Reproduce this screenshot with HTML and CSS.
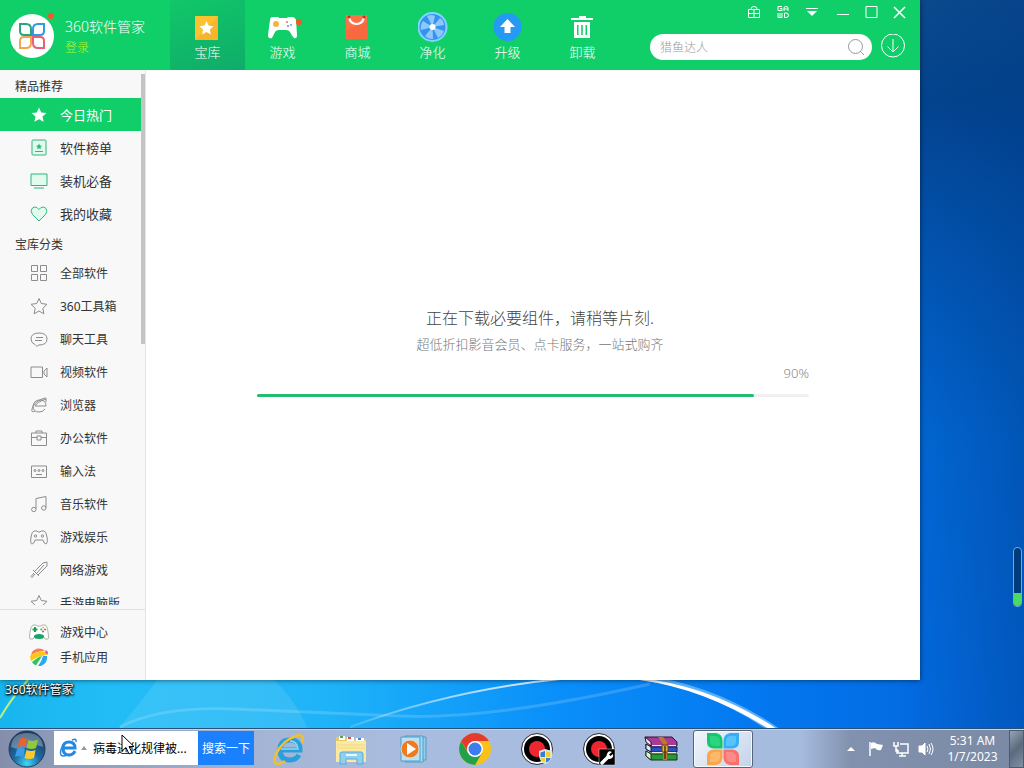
FILE: index.html
```html
<!DOCTYPE html>
<html lang="zh-CN">
<head>
  <meta charset="UTF-8">
  <meta name="viewport" content="width=device-width, initial-scale=1.0">
  <title>360软件管家</title>
  <link rel="stylesheet" href="styles.css">
</head>
<body>
  <div class="desktop">
    <svg class="wallpaper" viewBox="0 0 1024 729" preserveAspectRatio="none" aria-hidden="true">
      <defs>
        <linearGradient id="sky" x1="0" y1="0" x2="0" y2="1">
          <stop offset="0" stop-color="#0b4a8c"/>
          <stop offset="0.14" stop-color="#03448f"/>
          <stop offset="0.35" stop-color="#0156b4"/>
          <stop offset="0.6" stop-color="#0168d6"/>
          <stop offset="1" stop-color="#036be2"/>
        </linearGradient>
        <linearGradient id="glow" x1="0" y1="0" x2="1" y2="0">
          <stop offset="0" stop-color="#17b5ee"/>
          <stop offset="0.12" stop-color="#22bdf6"/>
          <stop offset="0.35" stop-color="#1fb4f8"/>
          <stop offset="0.6" stop-color="#0a90fa"/>
          <stop offset="0.82" stop-color="#0378f0"/>
          <stop offset="1" stop-color="#036be2"/>
        </linearGradient>
        <linearGradient id="edge" x1="0" y1="0" x2="1" y2="0">
          <stop offset="0" stop-color="#003a86" stop-opacity="0"/>
          <stop offset="1" stop-color="#003a86" stop-opacity="0.4"/>
        </linearGradient>
        <linearGradient id="arc" x1="0" y1="0" x2="1" y2="0">
          <stop offset="0" stop-color="#fff" stop-opacity="0.15"/>
          <stop offset="0.5" stop-color="#fff" stop-opacity="0.6"/>
          <stop offset="1" stop-color="#fff" stop-opacity="0.9"/>
        </linearGradient>
      </defs>
      <rect width="1024" height="729" fill="url(#sky)"/>
      <rect y="640" width="920" height="89" fill="url(#glow)"/>
      <rect x="900" width="124" height="729" fill="url(#edge)"/>
      <path d="M118 729Q138 706 160 676H270Q296 700 308 729Z" fill="#fff" opacity="0.1"/>
      <path d="M120 727Q160 706 235 709T400 716T650 684" fill="none" stroke="#fff" stroke-width="3" opacity="0.16"/>
      <path d="M350 727Q450 690 560 679" fill="none" stroke="url(#arc)" stroke-width="2"/>
      <path d="M640 675Q715 684 780 729L766 729Q705 688 640 680Z" fill="#8fd0ff" opacity="0.6"/>
      <path d="M640 678Q712 686 777 729L769 729Q705 689 640 680Z" fill="#fff"/>
      <path d="M0 718Q10 700 28 680" fill="none" stroke="#b9ee84" stroke-width="2"/>
    </svg>

    <div class="desktop-label">360软件管家</div>
    <div class="volume-gadget"><div class="volume-level"></div></div>

    <div class="window">
      <header class="header">
        <div class="brand">
          <div class="logo">
            <svg width="28" height="28" viewBox="0 0 28 28" fill="none" stroke-width="2">
              <path d="M13 13H6Q2 13 2 9V2H8Q13 2 13 7Z" stroke="#28a87a"/>
              <path d="M15 13V7Q15 2 20 2H26V9Q26 13 22 13Z" stroke="#2f9be0"/>
              <path d="M13 15H6Q2 15 2 19V26H8Q13 26 13 21Z" stroke="#f0a850"/>
              <path d="M15 15H22Q26 15 26 19V26H20Q15 26 15 21Z" stroke="#ea5f78"/>
            </svg>
            <span class="logo-dot"></span>
          </div>
          <div>
            <div class="brand-name">360软件管家</div>
            <a class="login" href="#">登录</a>
          </div>
        </div>

        <nav class="tabs">
          <a class="tab active" href="#">
            <svg width="30" height="30" viewBox="0 0 30 30">
              <rect x="2" y="4" width="23" height="24" fill="#fbc22f"/>
              <path d="M2 28L25 4V28Z" fill="#f8b52c"/>
              <path d="M13.500 9l2.100 4.600 5 .6-3.700 3.400 1 5-4.400-2.500-4.400 2.500 1-5-3.700-3.400 5-.6z" fill="#fff"/>
            </svg>
            <span>宝库</span>
          </a>
          <a class="tab" href="#">
            <svg width="38" height="30" viewBox="0 0 38 30">
              <path d="M9 5H14L15 6H23L24 5H28Q31 5 32 8L33 23Q33 27 30 26Q28 24 26 20Q25 18 22 18H15Q12 18 11 20Q9 24 8 26Q4 27 4 23L6 8Q6 5 9 5Z" fill="#fff"/>
              <circle cx="12" cy="12" r="3" fill="#f8b13c"/>
              <circle cx="23" cy="10" r="1" fill="#f06a6a"/>
              <circle cx="27" cy="13" r="1" fill="#56a8e8"/>
              <circle cx="24" cy="14" r="1" fill="#a06ad0"/>
              <circle cx="35" cy="10" r="3" fill="#fb5428"/>
            </svg>
            <span>游戏</span>
          </a>
          <a class="tab" href="#">
            <svg width="30" height="30" viewBox="0 0 30 30">
              <path d="M3 3H24L25 27H2Z" fill="#f9683f"/>
              <path d="M3 3H24V10L3 18Z" fill="#fb7a50" opacity="0.6"/>
              <path d="M6 5Q7 12 13.500 12T21 5" fill="none" stroke="#fff" stroke-width="2"/>
              <circle cx="6" cy="5" r="1.500" fill="#b5391c"/>
              <circle cx="21" cy="5" r="1.500" fill="#b5391c"/>
            </svg>
            <span>商城</span>
          </a>
          <a class="tab" href="#">
            <svg width="30" height="30" viewBox="0 0 30 30">
              <circle cx="14.500" cy="15" r="14" fill="#3493f2" stroke="#82d4ff" stroke-width="2"/>
              <g fill="#8cc8fa">
                <path d="M14.500 15L9 4Q14 2 17 4Z"/>
                <path d="M14.500 15L22 6Q26 9 26 13Z"/>
                <path d="M14.500 15L26 19Q24 24 20 26Z"/>
                <path d="M14.500 15L15 27Q10 27 7 24Z"/>
                <path d="M14.500 15L3 18Q2 13 5 9Z"/>
              </g>
              <circle cx="14.500" cy="15" r="3" fill="#fff"/>
            </svg>
            <span>净化</span>
          </a>
          <a class="tab" href="#">
            <svg width="30" height="30" viewBox="0 0 30 30">
              <circle cx="14.500" cy="15" r="14" fill="#249af4"/>
              <path d="M14.500 7L22 15H17.500V21H11.500V15H7Z" fill="#fff"/>
            </svg>
            <span>升级</span>
          </a>
          <a class="tab" href="#">
            <svg width="30" height="30" viewBox="0 0 30 30" fill="#fff">
              <path d="M11 4H18V6H25V8H3V6H11Z"/>
              <path fill-rule="evenodd" d="M6 10H22V26H6ZM9 13V23H10.500V13ZM13.200 13V23H14.800V13ZM17.500 13V23H19V13Z"/>
            </svg>
            <span>卸载</span>
          </a>
        </nav>

        <div class="header-right">
          <div class="window-bar">
            <div class="tool-buttons">
              <button type="button" aria-label="礼包">
                <svg width="14" height="14" viewBox="0 0 14 14"><path d="M1.500 4.500H12.500V12.500H1.500ZM1.500 8.500H12.500M7 4V13M4 4Q4 1.500 7 1.500T10 4"/></svg>
              </button>
              <button type="button" aria-label="皮肤">
                <svg width="14" height="14" viewBox="0 0 14 14"><path d="M6 1.500H2V5.500H6V3.500H4M8 6V3Q8 1.500 10 1.500T12 3V6M8 4H12M2 8V12.500H6V8M4 8V12M8.500 8V12.500H10Q12.500 12.500 12.500 10.200T10 8Z"/></svg>
              </button>
              <button type="button" aria-label="菜单">
                <svg width="14" height="14" viewBox="0 0 14 14"><path d="M1 3.500H13"/><path d="M2 6H12L7 11Z" fill="#fff" stroke="none"/></svg>
              </button>
            </div>
            <div class="window-buttons">
              <button type="button" aria-label="最小化">
                <svg width="14" height="14" viewBox="0 0 14 14"><path d="M1 9.500H13"/></svg>
              </button>
              <button type="button" aria-label="最大化">
                <svg width="14" height="14" viewBox="0 0 14 14"><path d="M2 1.500H13V12.500H2Z"/></svg>
              </button>
              <button type="button" aria-label="关闭">
                <svg width="14" height="14" viewBox="0 0 14 14"><path d="M2 2L13 13M13 2L2 13" stroke-width="1.500"/></svg>
              </button>
            </div>
          </div>
          <div class="search-row">
            <form class="search">
              <input type="text" placeholder="猎鱼达人" aria-label="搜索软件">
              <button type="button" aria-label="搜索">
                <svg width="18" height="18" viewBox="0 0 18 18"><circle cx="8.500" cy="8.500" r="7"/><path d="M13 13L17 17"/></svg>
              </button>
            </form>
            <button class="download-btn" type="button" aria-label="下载管理">
              <svg width="24" height="24" viewBox="0 0 24 24"><circle cx="12" cy="11.500" r="11.500"/><path d="M12 5V18M6.500 12.500L12 18L17.500 12.500"/></svg>
            </button>
          </div>
        </div>
      </header>

      <div class="window-body">
        <aside class="sidebar">
          <div class="side-scroll">
            <h2>精品推荐</h2>
            <ul class="side-list featured">
              <li><a class="active" href="#">
                <svg viewBox="0 0 18 18"><path d="M9 1.500l2.200 4.900 5.300.6-4 3.600 1.100 5.200L9 13.200l-4.600 2.600 1.100-5.200-4-3.600 5.300-.6z" fill="#fff" stroke="none"/></svg>
                今日热门</a></li>
              <li><a href="#">
                <svg viewBox="0 0 18 18"><rect x="2" y="1" width="14" height="15" rx="1"/><path d="M5 12.500H13"/><path d="M9 4.500l1 2 2 .3-1.500 1.400.4 2L9 9.300l-1.900.9.4-2L6 6.800l2-.3z" class="solid"/></svg>
                软件榜单</a></li>
              <li><a href="#">
                <svg viewBox="0 0 18 18"><path d="M1 2H17V13.500H1ZM4 16H14"/></svg>
                装机必备</a></li>
              <li><a href="#">
                <svg viewBox="0 0 18 18"><path d="M9 16L2.500 9.500Q0 6 2 3.500Q4 1 7 2.500L9 4.500L11 2.500Q14 1 16 3.500Q18 6 15.500 9.500Z"/></svg>
                我的收藏</a></li>
            </ul>
            <h2>宝库分类</h2>
            <ul class="side-list">
              <li><a href="#">
                <svg viewBox="0 0 18 18"><path d="M1.500 1.500H7.500V7.500H1.500ZM10.500 1.500H16.500V7.500H10.500ZM1.500 10.500H7.500V16.500H1.500ZM10.500 10.500H16.500V16.500H10.500Z"/></svg>
                全部软件</a></li>
              <li><a href="#">
                <svg viewBox="0 0 18 18"><path d="M9 1.500l2.300 5 5.700.8-4.200 4 1.100 5.500L9 14l-4.900 2.800 1.100-5.500-4.200-4 5.700-.8z"/></svg>
                360工具箱</a></li>
              <li><a href="#">
                <svg viewBox="0 0 18 18"><path d="M9 3Q17 3 17 9T9 15Q8 15 7 16.500L5 14.500Q1 13 1 9Q1 3 9 3ZM6 7.500H13M5 10.500H12"/></svg>
                聊天工具</a></li>
              <li><a href="#">
                <svg viewBox="0 0 18 18"><path d="M1 4H12.500V14.500H1ZM14 8L17 5V14L14 11Z"/></svg>
                视频软件</a></li>
              <li><a href="#">
                <svg viewBox="0 0 18 18"><path d="M5 10H16Q16 4 10 4Q4 4 3 10Q3 16 9 16Q13 16 15 13M5 10Q7 6 16 3Q17 1 12 3Q4 6 2 13Q1 17 5 15M16 3V6"/></svg>
                浏览器</a></li>
              <li><a href="#">
                <svg viewBox="0 0 18 18"><path d="M1.500 4H16.500V16.500H1.500ZM6 4V2H12V4M1.500 8.500H7M11 8.500H16.500M7 7H11V11H7Z"/></svg>
                办公软件</a></li>
              <li><a href="#">
                <svg viewBox="0 0 18 18"><path d="M1.500 4H16.500V15.500H1.500ZM6 12.500H12"/><circle cx="5" cy="8.500" r="1"/><circle cx="9" cy="8.500" r="1"/><circle cx="13" cy="8.500" r="1"/></svg>
                输入法</a></li>
              <li><a href="#">
                <svg viewBox="0 0 18 18"><path d="M6 14V3.500L16 1.500V12.500"/><circle cx="3.800" cy="14.500" r="2.200"/><circle cx="13.800" cy="13" r="2.200"/></svg>
                音乐软件</a></li>
              <li><a href="#">
                <svg viewBox="0 0 18 18"><path d="M4 3H7L8 4H10L11 3H14Q16 3 17 9T16 16Q14 16 13 12H5Q4 16 2 16T1 9Q2 3 4 3Z"/><circle cx="5.500" cy="8" r="1.200"/><circle cx="12.500" cy="8" r="1.200"/></svg>
                游戏娱乐</a></li>
              <li><a href="#">
                <svg viewBox="0 0 18 18"><path d="M17 1V5L8 14L4.500 10.500L13 2ZM14 4L7 12M3 9L9 15M5 13L2 16.500L1 15.500L4 12"/></svg>
                网络游戏</a></li>
              <li><a href="#">
                <svg viewBox="0 0 18 18"><path d="M9 1.500l2.300 5 5.700.8-4.200 4 1.100 5.500L9 14l-4.900 2.800 1.100-5.500-4.200-4 5.700-.8z"/></svg>
                手游电脑版</a></li>
            </ul>
            <span class="scroll-thumb"></span>
          </div>
          <ul class="side-footer">
            <li><a href="#">
              <svg viewBox="0 0 22 18"><path d="M5 2H8L9 3H13L14 2H17Q19 2 20 9T20 16H17L15 13H7L5 16H2Q1 15 2 9T5 2Z" fill="#fff" stroke="#a9b5aa"/><path d="M7 4V9M4.500 6.500H9.500" stroke="#17a54a" stroke-width="2"/><circle cx="15" cy="4.500" r="1" fill="#e0c23c"/><circle cx="13.300" cy="6.500" r="1" fill="#4a90d0"/><circle cx="17" cy="6.500" r="1" fill="#e04a3c"/><circle cx="15" cy="8.500" r="1" fill="#17a54a"/><ellipse cx="11" cy="13.500" rx="5" ry="2.500" fill="#17a566"/></svg>
              游戏中心</a></li>
            <li><a href="#">
              <svg viewBox="0 0 22 18"><path d="M4 4Q8 -1 14 1L17 3Q9 3 3 7Z" fill="#fb7c50"/><path d="M2 8Q8 3 18 4L19 7Q10 8 3 13Z" fill="#fcc619"/><path d="M18 2L20 4L19.500 7L17 4Z" fill="#ce57b8"/><path d="M4 14Q10 9 14 8L8 17.500Q5 16 4 14Z" fill="#2ec45c"/><path d="M10 18Q14 13 15 8L19 8Q20 15 13 18Z" fill="#28a8f0"/></svg>
              手机应用</a></li>
          </ul>
        </aside>

        <main class="content">
          <div class="loading">
            <div class="loading-text">
              <p class="loading-title">正在下载必要组件，请稍等片刻.</p>
              <p class="loading-sub">超低折扣影音会员、点卡服务，一站式购齐</p>
            </div>
            <div class="percent">90%</div>
            <div class="progress" role="progressbar" aria-valuenow="90" aria-valuemin="0" aria-valuemax="100">
              <div class="progress-fill" style="width: 90%"></div>
            </div>
          </div>
        </main>
      </div>
    </div>
  </div>

  <footer class="taskbar">
    <button class="start" type="button" aria-label="Start">
      <svg width="38" height="38" viewBox="0 0 38 38">
        <defs>
          <radialGradient id="orb" cx="0.5" cy="0.9" r="0.8">
            <stop offset="0" stop-color="#3fd8f5"/>
            <stop offset="0.45" stop-color="#1c6ca4"/>
            <stop offset="1" stop-color="#1c3d63"/>
          </radialGradient>
        </defs>
        <circle cx="19" cy="19" r="18" fill="url(#orb)" stroke="#26405c"/>
        <path d="M3 17Q4 3 19 3T35 17Q26 13 19 17T3 17Z" fill="#fff" opacity="0.3"/>
        <path d="M12 9Q15 7 19 9L17.500 17Q14 15 9.500 17Z" fill="#f0602a"/>
        <path d="M20.500 10Q25 12 30 9.500L28 18Q24 20 18.500 18Z" fill="#93c83d"/>
        <path d="M9 19Q13 17 17 19L15 27Q11 25 7 27Z" fill="#3c9ce8"/>
        <path d="M18.500 20Q23 22 27.500 20L26 28Q21 30 16.500 28Z" fill="#fcc92c"/>
      </svg>
    </button>

    <form class="task-search">
      <svg width="32" height="22" viewBox="0 0 32 22" aria-hidden="true">
        <path d="M4 11H17Q17 5 11 5T5 11Q5 18 11 18Q15 18 17 14" fill="none" stroke="#2588e4" stroke-width="3"/>
        <path d="M14 3Q19 1 18 5M6 7Q1 14 3 18Q5 20 9 18" fill="none" stroke="#2588e4" stroke-width="1.500"/>
        <path d="M23 13L26 9L29 13Z" fill="#999"/>
      </svg>
      <input type="text" value="病毒进化规律被..." aria-label="搜索">
      <button type="button">搜索一下</button>
    </form>

    <div class="task-icons">
      <button type="button" aria-label="Internet Explorer">
        <svg width="34" height="34" viewBox="0 0 34 34" fill="none">
          <path d="M8 18H28Q28 8 18 8T8 18Q8 28 18 28Q24 28 27 23" stroke="#2a9fdc" stroke-width="5"/>
          <path d="M9 17H26Q25 9 18 9" stroke="#8bddfa" stroke-width="1.500"/>
          <path d="M30 11Q33 1 24 4Q11 8 4 22Q0 32 6 32Q9 32 13 29" stroke="#f3bf2e" stroke-width="2.500"/>
        </svg>
      </button>
      <button type="button" aria-label="Explorer">
        <svg width="34" height="34" viewBox="0 0 34 34">
          <path d="M2 5H12L14 7H32V30H2Z" fill="#e9c86c"/>
          <path d="M5 4H11V8H5ZM13 5H20V9H13ZM22 6H30V10H22Z" fill="#fff"/>
          <path d="M6 4h3v2h-3z" fill="#50a850"/><path d="M14 5h3v2h-3z" fill="#d8503c"/><path d="M24 6h3v2h-3z" fill="#3c8cd8"/>
          <path d="M2 9H32V30H2Z" fill="#fae9a0"/>
          <path d="M3 13H31M3 16H31" stroke="#f3d981"/>
          <path d="M6 32V22Q6 20 8 20H27Q29 20 29 22V32H23V27H12V32Z" fill="#8fd0f0" stroke="#58a9d8"/>
          <path d="M12 23H23" stroke="#e8f8ff" stroke-width="2"/>
        </svg>
      </button>
      <button type="button" aria-label="Media Player">
        <svg width="34" height="34" viewBox="0 0 34 34">
          <path d="M13 5H30V28H13Z" fill="#92cdea" stroke="#4e9bc6"/>
          <path d="M9 4H27V30H9Z" fill="#a9dcf3" stroke="#4e9bc6"/>
          <path d="M5 5H24V29H5Z" fill="#b9e2f4" stroke="#4e9bc6"/>
          <circle cx="14" cy="17" r="9" fill="#f17a1c" stroke="#d8dce2"/>
          <path d="M11 11L20 17L11 23Z" fill="#fff"/>
        </svg>
      </button>
      <button type="button" aria-label="Chrome">
        <svg width="34" height="34" viewBox="0 0 34 34">
          <circle cx="17" cy="17" r="16" fill="#fbc116"/>
          <path d="M3.200 9A16 16 0 0 0 17 33L24 21L17 17L10 21Z" fill="#22a04b"/>
          <path d="M3.200 9A16 16 0 0 1 30.900 9H17Q11 10 10 20Z" fill="#e33b2e"/>
          <circle cx="17" cy="17" r="8" fill="#fff"/>
          <circle cx="17" cy="17" r="6.500" fill="#3b7ded"/>
        </svg>
      </button>
      <button type="button" aria-label="Recorder">
        <svg width="34" height="34" viewBox="0 0 34 34">
          <circle cx="17" cy="17" r="14" fill="#000" stroke="#fff" stroke-width="2"/>
          <circle cx="17" cy="17" r="15.500" fill="none" stroke="#333"/>
          <circle cx="17" cy="17" r="8" fill="#ee2630"/>
          <path d="M25 17L32 19V24Q31 30 25 32Q20 30 19 24V19Z" fill="#dfe6ee"/>
          <path d="M25 19V25H20.500V20.500Z" fill="#3480d0"/><path d="M26 19L30.500 20.500V25H26Z" fill="#f3cf35"/>
          <path d="M20.500 26H25V30.500Q21 29 20.500 26Z" fill="#f3cf35"/><path d="M26 26H30.500Q30 29 26 30.500Z" fill="#3480d0"/>
        </svg>
      </button>
      <button type="button" aria-label="Recorder Tools">
        <svg width="34" height="34" viewBox="0 0 34 34">
          <circle cx="17" cy="17" r="14" fill="#000" stroke="#fff" stroke-width="2"/>
          <circle cx="17" cy="17" r="15.500" fill="none" stroke="#333"/>
          <circle cx="17" cy="17" r="8" fill="#ee2630"/>
          <rect x="17" y="17" width="16" height="16" fill="#000" stroke="#ddd" stroke-width="0.500"/>
          <path d="M20 31L26 25" stroke="#fff" stroke-width="3.500" stroke-linecap="round"/>
          <path d="M30 20Q26 18 25 22Q23 27 28 27Q32 26 31 22L28.500 24L27 22.500Z" fill="#fff"/>
        </svg>
      </button>
      <button type="button" aria-label="WinRAR">
        <svg width="34" height="34" viewBox="0 0 34 34">
          <path d="M1 5H28L33 10V14H7Z" fill="#a83a9a" stroke="#301030"/>
          <path d="M1 5L7 10V14L2 10Z" fill="#f0e8e0" stroke="#301030"/>
          <path d="M2 12L7 15H33V20H7L2 17Z" fill="#2950c4" stroke="#101c50"/>
          <path d="M2 12L7 15V20L2 17Z" fill="#f0e8e0" stroke="#101c50"/>
          <path d="M2 19L7 22H33V28H7L2 24Z" fill="#2a9838" stroke="#0c3810"/>
          <path d="M2 19L7 22V28L2 24Z" fill="#f0e8e0" stroke="#0c3810"/>
          <path d="M8 13.500H32M8 20.500H32" stroke="#ece6d8"/>
          <path d="M15 5H19L23 10V28H19V12L14 5Z" fill="#c4762a"/>
          <path d="M18 13H24V20H18Z" fill="#e0b040" stroke="#6a4010"/>
          <path d="M21 14V27" stroke="#523510" stroke-width="1.500"/>
        </svg>
      </button>
      <button class="running" type="button" aria-label="360软件管家">
        <svg width="34" height="34" viewBox="0 0 34 34">
          <path d="M1 1H10Q16.500 2 16.500 9V16.500H8Q1 16 1 10Z" fill="#15c76c"/>
          <path d="M33 1H24Q17.500 2 17.500 9V16.500H26Q33 16 33 10Z" fill="#35aef5"/>
          <path d="M1 33H10Q16.500 32 16.500 25V17.500H8Q1 18 1 24Z" fill="#fba34e"/>
          <path d="M33 33H24Q17.500 32 17.500 25V17.500H26Q33 18 33 24Z" fill="#f9706c"/>
          <path d="M4 4H10Q14 5 14 9V14H8Q4 13 4 10Z" fill="#2cd480"/>
          <path d="M30 4H24Q20 5 20 9V14H26Q30 13 30 10Z" fill="#58c4fc"/>
          <path d="M4 30H10Q14 29 14 25V20H8Q4 21 4 24Z" fill="#fdb868"/>
          <path d="M30 30H24Q20 29 20 25V20H26Q30 21 30 24Z" fill="#fc8a86"/>
        </svg>
      </button>
    </div>

    <div class="tray">
      <svg width="20" height="20" viewBox="0 0 20 20"><path d="M6 12L10 8L14 12Z" fill="#fff"/></svg>
      <svg width="20" height="20" viewBox="0 0 20 20"><path d="M4 3V17" stroke="#fff" stroke-width="1.500"/><path d="M5 4Q8 2 11 5L17 6L15 11Q11 12 9 9L5 10Z" fill="#fff"/></svg>
      <svg width="20" height="20" viewBox="0 0 20 20" fill="none" stroke="#fff" stroke-width="1.500"><path d="M9 5H17V14H6V10M8 17H15M11 14V17M3 3V7H7V3M5 7V12H8"/></svg>
      <svg width="20" height="20" viewBox="0 0 20 20" fill="none" stroke="#fff"><path d="M3 7H6L9 4V16L6 13H3Z" fill="#fff"/><path d="M11 7Q13 10 11 13M13 5Q16 10 13 15M15 4Q19 10 15 16"/></svg>
    </div>
    <div class="clock">
      <div>5:31 AM</div>
      <div>1/7/2023</div>
    </div>
    <button class="show-desktop" type="button" aria-label="Show desktop"></button>
  </footer>

  <svg class="cursor" width="15" height="22" viewBox="0 0 15 22" aria-hidden="true"><path d="M1 1V17L5 13.500L8 20L11 18.500L8 12.500H13Z" fill="#fff" stroke="#000"/></svg>
</body>
</html>
```

FILE: styles.css
```css
:root {
  --green: #10cf69;
  --line-green: #2fb67c;
  --text: #333;
  --muted: #888;
  --side: #f8f8f8;
}

* {
  box-sizing: border-box;
}

body {
  margin: 0;
  height: 100vh;
  display: flex;
  flex-direction: column;
  overflow: hidden;
  font-family: "Noto Sans", "Noto Sans CJK SC", sans-serif;
  font-size: 12px;
  color: var(--text);
}

h2, p, ul {
  margin: 0;
  padding: 0;
  font-weight: normal;
}

ul {
  list-style: none;
}

a {
  color: inherit;
  text-decoration: none;
}

button, input {
  font: inherit;
  border: none;
  padding: 0;
  margin: 0;
  background: none;
}

button {
  cursor: pointer;
}

svg {
  display: block;
  flex-shrink: 0;
}

/* desktop */
.desktop {
  position: relative;
  flex: 1;
  min-height: 0;
}

.wallpaper {
  position: absolute;
  inset: 0;
  width: 100%;
  height: 100%;
}

.desktop-label {
  position: absolute;
  left: 5px;
  bottom: 30px;
  line-height: 18px;
  color: #fff;
  text-shadow: 0 1px 2px #000, 1px 1px 2px #000, 0 0 3px #000;
}

.volume-gadget {
  position: absolute;
  right: 2px;
  bottom: 122px;
  width: 9px;
  height: 60px;
  display: flex;
  align-items: flex-end;
  border: 1px solid #6da9e0;
  border-radius: 4px;
  background: #003c7c;
  overflow: hidden;
}

.volume-level {
  width: 100%;
  height: 13px;
  background: #4cd964;
}

/* app window */
.window {
  position: absolute;
  inset: 0 104px 49px 0;
  display: flex;
  flex-direction: column;
  background: #fff;
  box-shadow: 0 0 5px rgba(0,0,0,0.6);
}

.header {
  display: flex;
  height: 70px;
  background: var(--green);
  color: #fff;
  font-weight: 300;
}

.brand {
  width: 170px;
  display: flex;
  gap: 11px;
  padding: 14px 0 0 10px;
}

.logo {
  position: relative;
  display: flex;
  align-items: center;
  justify-content: center;
  width: 44px;
  height: 44px;
  border-radius: 50%;
  background: #fff;
}

.logo-dot {
  position: absolute;
  top: -1px;
  right: 0;
  width: 6px;
  height: 6px;
  border-radius: 50%;
  background: #fb5428;
}

.brand-name {
  font-size: 14px;
  line-height: 26px;
}

.login {
  display: block;
  line-height: 16px;
  color: #b4f51e;
}

.tabs {
  display: flex;
}

.tab {
  width: 75px;
  display: flex;
  flex-direction: column;
  align-items: center;
  padding-top: 12px;
  font-size: 13px;
  line-height: 21px;
}

.tab.active {
  background: linear-gradient(160deg, #10c768, #0fb868 55%, #10ac6a);
}

.header-right {
  flex: 1;
  display: flex;
  flex-direction: column;
  padding-left: 30px;
}

.window-bar {
  display: flex;
  justify-content: flex-end;
  gap: 3px;
  height: 24px;
  padding-right: 7px;
}

.tool-buttons, .window-buttons {
  display: flex;
}

.window-bar button {
  display: flex;
  align-items: center;
  justify-content: center;
  width: 28px;
}

.window-bar .tool-buttons button {
  width: 29px;
}

.window-bar svg, .download-btn svg {
  fill: none;
  stroke: #fff;
}

.search-row {
  display: flex;
  gap: 9px;
  padding: 10px 15px 0 0;
}

.search {
  flex: 1;
  min-width: 0;
  display: flex;
  align-items: center;
  height: 26px;
  padding: 0 7px 0 10px;
  border-radius: 13px;
  background: #fff;
}

.search input {
  flex: 1;
  min-width: 0;
  outline: none;
}

.search input::placeholder {
  color: #999;
}

.search svg {
  fill: none;
  stroke: #999;
}

.download-btn {
  width: 24px;
  height: 24px;
}

.window-body {
  flex: 1;
  min-height: 0;
  display: flex;
}

/* sidebar */
.sidebar {
  width: 146px;
  display: flex;
  flex-direction: column;
  background: var(--side);
  border-right: 1px solid #e4e4e4;
}

.side-scroll {
  position: relative;
  flex: 1;
  min-height: 0;
  margin-bottom: 4px;
  padding: 2px 4px 0 0;
  overflow: hidden;
}

.sidebar h2 {
  padding: 4px 0 0 15px;
  font-size: 12px;
  line-height: 22px;
}

.side-list a {
  display: flex;
  align-items: center;
  gap: 12px;
  height: 33px;
  padding-left: 30px;
}

.side-list svg {
  width: 18px;
  height: 18px;
  fill: none;
  stroke: #8c8c8c;
}

.featured a {
  font-size: 13px;
}

.featured svg {
  fill: #e2fbef;
  stroke: var(--line-green);
}

.featured .solid {
  fill: var(--line-green);
  stroke: none;
}

.side-list a.active {
  background: var(--green);
  color: #fff;
}

.scroll-thumb {
  position: absolute;
  top: 4px;
  right: 0;
  width: 4px;
  height: 270px;
  background: #c4c4c4;
}

.side-footer {
  height: 71px;
  padding-top: 9px;
  border-top: 1px solid #e0e0e0;
}

.side-footer a {
  display: flex;
  align-items: center;
  gap: 10px;
  height: 25px;
  padding-left: 28px;
}

.side-footer svg {
  width: 22px;
  height: 18px;
}

/* download progress */
.content {
  flex: 1;
  display: flex;
  align-items: center;
  justify-content: center;
  padding: 0 16px 47px;
}

.loading {
  width: 100%;
  max-width: 552px;
  font-weight: 300;
}

.loading-text {
  padding-left: 14px;
  text-align: center;
}

.loading-title {
  font-size: 16px;
  font-weight: 300;
  line-height: 24px;
  color: #444;
}

.loading-sub {
  font-size: 13px;
  font-weight: 300;
  line-height: 28px;
  color: #777;
}

.percent {
  font-size: 13px;
  line-height: 30px;
  text-align: right;
  color: var(--muted);
}

.progress {
  height: 3px;
  margin-top: 6px;
  border-radius: 2px;
  background: #f0f0f0;
}

.progress-fill {
  height: 3px;
  border-radius: 2px;
  background: #22bd70;
}

/* taskbar */
.taskbar {
  position: relative;
  display: flex;
  align-items: stretch;
  height: 39px;
  border-top: 1px solid #c3d3ea;
  box-shadow: 0 -1px 0 #24527c;
  background: linear-gradient(to right, #848eaa 0, #8d9bb9 54px, #a4b4d4 260px, #a9bcdf 400px, #a6bcdf 800px, #8292ae 850px, #7a89a4 100%);
}

.start {
  width: 54px;
  padding-left: 8px;
}

.task-search {
  display: flex;
  align-items: center;
  width: 200px;
  margin: 1px 0 3px;
  padding-left: 4px;
  background: #fff;
}

.task-search input {
  flex: 1;
  min-width: 0;
  padding-left: 3px;
  outline: none;
  color: #000;
}

.task-search button {
  align-self: stretch;
  width: 56px;
  background: #1b80fb;
  color: #fff;
}

.task-icons {
  display: flex;
  gap: 2px;
  padding-left: 5px;
}

.task-icons button {
  display: flex;
  align-items: center;
  justify-content: center;
  width: 60px;
  border: 1px solid transparent;
  border-radius: 3px;
}

.task-icons .running {
  border-color: #55657f;
  background: linear-gradient(135deg, #f2f6fb, #c5d3e8);
  box-shadow: inset 0 0 0 1px #f4f8ff;
}

.tray {
  display: flex;
  align-items: center;
  gap: 5px;
  margin-left: auto;
}

.clock {
  width: 73px;
  padding-top: 3px;
  text-align: center;
  line-height: 16px;
  color: #fff;
}

.show-desktop {
  width: 15px;
  border: 1px solid #4d5b70;
  background: linear-gradient(135deg, #96a3b6, #5c6a7e 50%, #8391a6);
}

.cursor {
  position: absolute;
  left: 121px;
  top: 734px;
}
```
